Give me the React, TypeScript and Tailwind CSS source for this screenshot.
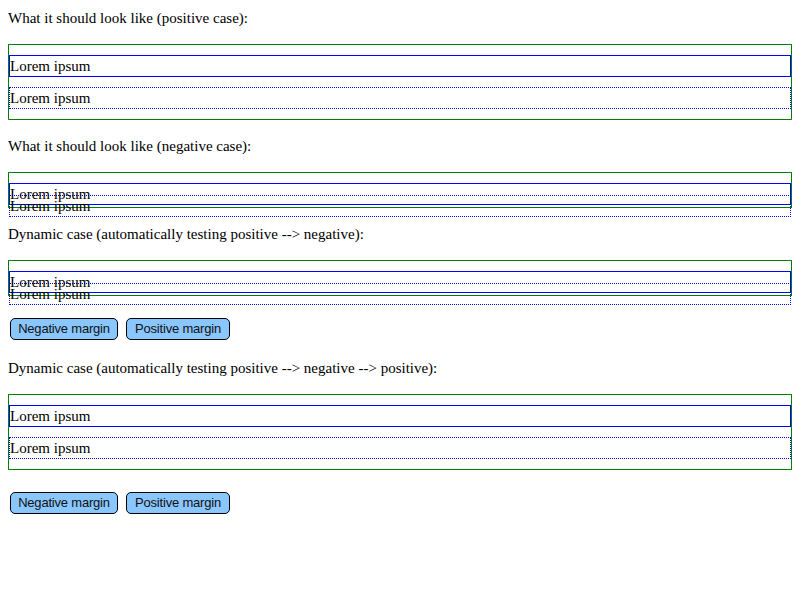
import React from 'react'

const serif = "font-['Liberation_Serif','Times_New_Roman',serif]"
const btn =
  "h-[22px] rounded-[5px] border border-black bg-[#8ac6ff] px-0 text-center font-['Liberation_Sans',Arial,sans-serif] text-[13px] leading-[20px] tracking-[-0.2px] text-[#111]"

const Positive = () => (
  <div className="mt-4 border border-[#008000]">
    <div className="mt-[10px] h-[22px] border border-[#0000ff] leading-[20px]">Lorem ipsum</div>
    <div className="my-[10px] h-[22px] border border-dotted border-[#0000ff] leading-[20px]">Lorem ipsum</div>
  </div>
)

const Negative = () => (
  <div className="mt-4 border border-[#008000]">
    <div className="mt-[10px] h-[22px] border border-[#0000ff] leading-[20px]">Lorem ipsum</div>
    <div className="-mt-[10px] -mb-[10px] h-[22px] border border-dotted border-[#0000ff] leading-[20px]">Lorem ipsum</div>
  </div>
)

const Buttons = ({ last }: { last?: boolean }) => (
  <div className={`mt-[22px] flex gap-2 pl-[2px] ${last ? '' : 'mb-[18px]'}`}>
    <button className={`w-[108px] ${btn}`}>Negative margin</button>
    <button className={`w-[104px] ${btn}`}>Positive margin</button>
  </div>
)

export default function App() {
  return (
    <div className={`flex min-h-[600px] flex-col bg-white p-2 text-[15px] leading-[20px] text-black ${serif}`}>
      <div>What it should look like (positive case):</div>
      <Positive />
      <div className="mt-4">What it should look like (negative case):</div>
      <Negative />
      <div className="mt-4">{'Dynamic case (automatically testing positive --> negative):'}</div>
      <Negative />
      <Buttons />
      <div>{'Dynamic case (automatically testing positive --> negative --> positive):'}</div>
      <Positive />
      <Buttons last />
    </div>
  )
}
